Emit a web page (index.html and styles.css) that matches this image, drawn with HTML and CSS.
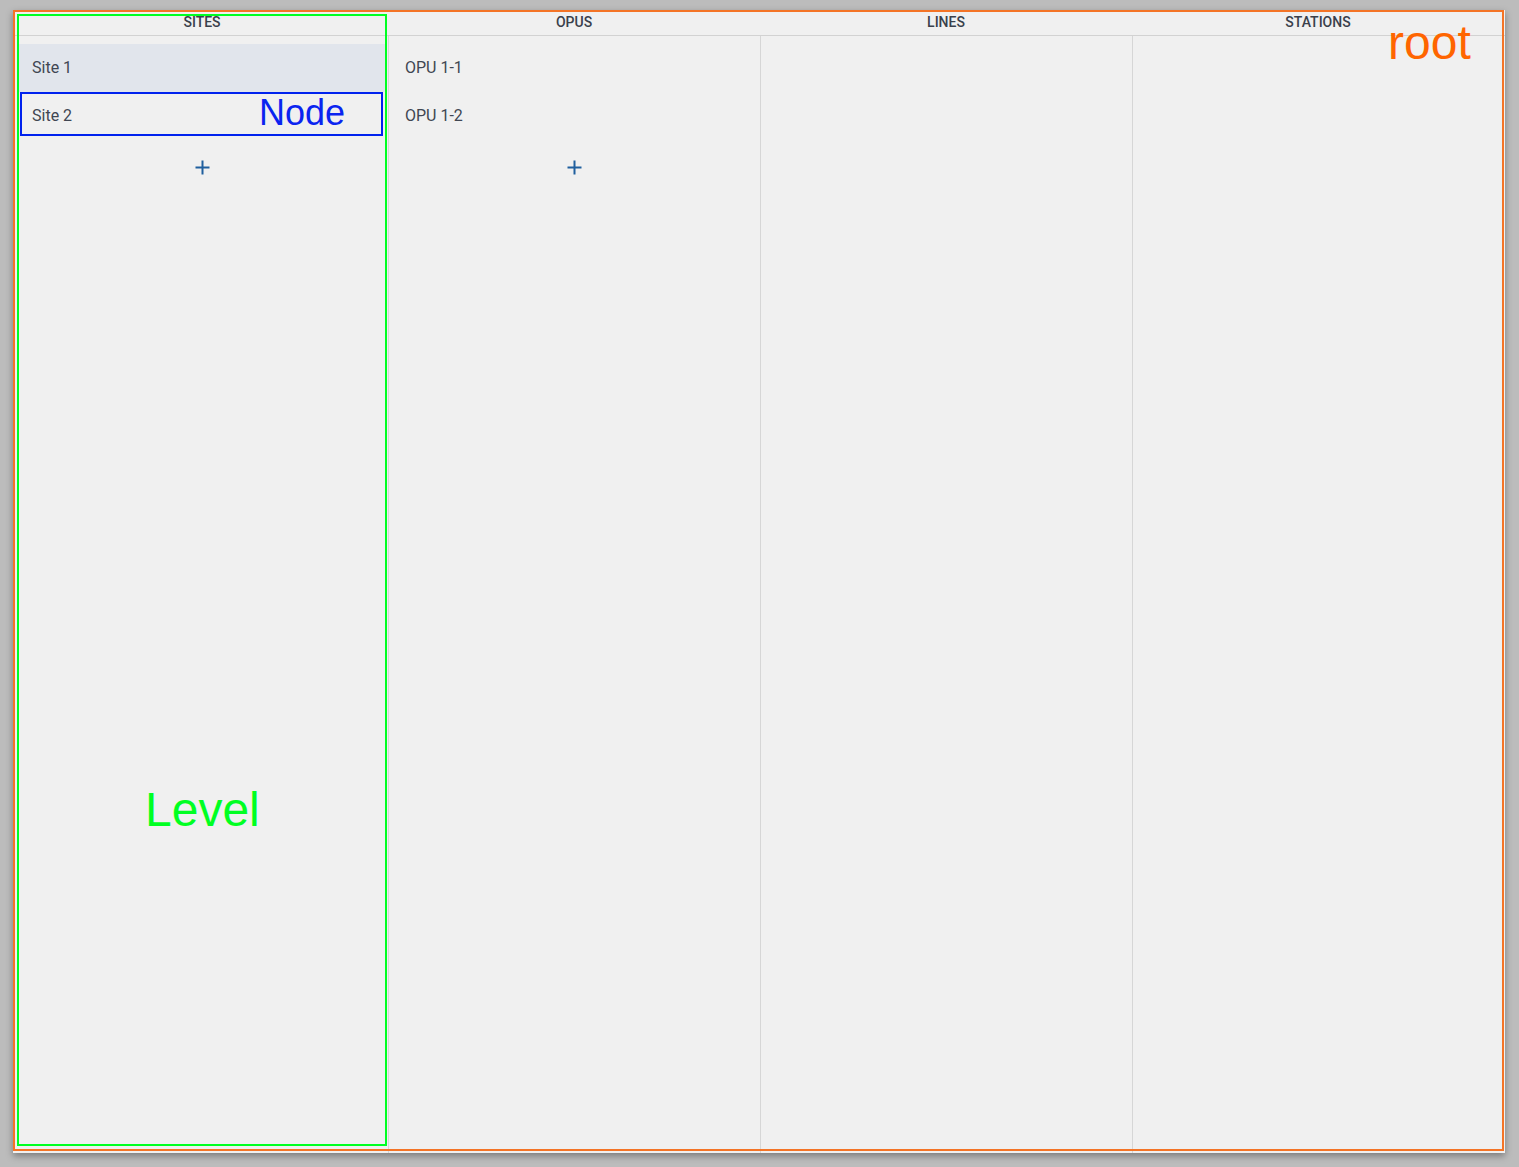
FILE: index.html
```html
<!DOCTYPE html>
<html>
<head>
<meta charset="utf-8">
<link rel="stylesheet" href="styles.css">
</head>
<body>
<div class="card">
  <div class="headers">
    <div class="hcell">Sites</div>
    <div class="hcell">Opus</div>
    <div class="hcell">Lines</div>
    <div class="hcell">Stations</div>
  </div>
  <div class="levels">
    <div class="level">
      <div class="node selected">Site 1</div>
      <div class="node">Site 2</div>
      <div class="add"><svg width="15" height="15" viewBox="0 0 15 15"><path d="M7.5 0.5v14M0.5 7.5h14" stroke="#1f5f9e" stroke-width="2" fill="none"/></svg></div>
    </div>
    <div class="level">
      <div class="node">OPU 1-1</div>
      <div class="node">OPU 1-2</div>
      <div class="add"><svg width="15" height="15" viewBox="0 0 15 15"><path d="M7.5 0.5v14M0.5 7.5h14" stroke="#1f5f9e" stroke-width="2" fill="none"/></svg></div>
    </div>
    <div class="level"></div>
    <div class="level"></div>
  </div>
  <div class="mark mark-root"></div>
  <div class="mark mark-level"></div>
  <div class="mark mark-node"></div>
  <div class="label label-root">root</div>
  <div class="label label-level">Level</div>
  <div class="label label-node">Node</div>
</div>
</body>
</html>
```
FILE: styles.css
```css
html, body {
  margin: 0;
  padding: 0;
}
body {
  background: #bcbcbc;
  padding: 10px 0 0 13px;
  height: 1167px;
  box-sizing: border-box;
  font-family: Roboto, "Noto Sans", sans-serif;
}
.card {
  position: relative;
  width: 1492px;
  height: 1143px;
  box-sizing: border-box;
  padding-left: 3px;
  background: #f0f0f0;
  box-shadow: 0 3px 7px rgba(0, 0, 0, 0.35);
  display: flex;
  flex-direction: column;
}
.headers {
  display: grid;
  grid-template-columns: repeat(4, 372px);
  height: 25px;
  border-bottom: 1px solid #d2d2d2;
  margin-left: -3px;
  padding-left: 3px;
}
.hcell {
  text-align: center;
  line-height: 24px;
  font-size: 14px;
  font-weight: 500;
  text-transform: uppercase;
  color: #3a404b;
}
.levels {
  flex: 1;
  display: grid;
  grid-template-columns: repeat(4, 372px);
}
.level {
  padding-top: 8px;
  display: flex;
  flex-direction: column;
}
.level + .level {
  border-left: 1px solid #d6d6d6;
}
.node {
  height: 48px;
  box-sizing: border-box;
  margin: 0 2px 0 1px;
  padding: 0 0 2px 15px;
  display: flex;
  align-items: center;
  font-size: 16px;
  color: #404652;
}
.node.selected {
  background: #e1e5ec;
}
.add {
  height: 54px;
  display: flex;
  align-items: center;
  justify-content: center;
}
.add svg {
  display: block;
}
.mark {
  position: absolute;
  box-sizing: border-box;
  pointer-events: none;
}
.mark-root {
  left: 0;
  top: 0;
  width: 1491px;
  height: 1141px;
  border: 2px solid #f47426;
}
.mark-level {
  left: 4px;
  top: 4px;
  width: 370px;
  height: 1132px;
  border: 2px solid #00ff22;
}
.mark-node {
  left: 7px;
  top: 82px;
  width: 363px;
  height: 44px;
  border: 2px solid #0022ee;
}
.label {
  position: absolute;
  font-family: "Liberation Sans", Arial, sans-serif;
  line-height: 1;
  white-space: nowrap;
}
.label-root {
  left: 1375px;
  top: 9px;
  font-size: 48px;
  color: #ff6500;
}
.label-level {
  left: 132px;
  top: 776px;
  font-size: 48px;
  color: #00ff22;
}
.label-node {
  left: 246px;
  top: 85px;
  font-size: 36px;
  color: #0a24f0;
}
```
